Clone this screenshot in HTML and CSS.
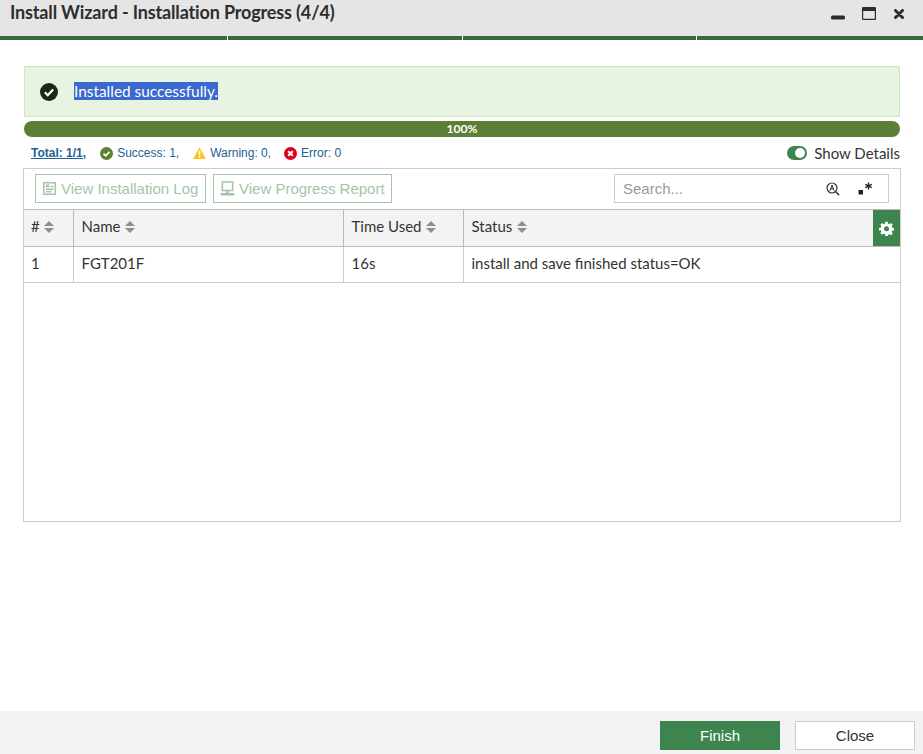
FILE: index.html
```html
<!DOCTYPE html>
<html lang="en">
<head>
<meta charset="utf-8">
<title>Install Wizard</title>
<link rel="stylesheet" href="styles.css">
</head>
<body>
<div class="dialog">
  <header class="titlebar">
    <h1 class="title">Install Wizard - Installation Progress (4/4)</h1>
    <div class="winctl">
      <svg class="ic-min" width="14" height="5" viewBox="0 0 14 5"><rect x="0" y="0.500" width="14" height="4" rx="1.500" fill="#2b2b2b"/></svg>
      <svg class="ic-max" width="14" height="13" viewBox="0 0 14 13"><path d="M1 0h12a1 1 0 0 1 1 1v11a1 1 0 0 1-1 1H1a1 1 0 0 1-1-1V1a1 1 0 0 1 1-1zM1.200 4v7.800h11.600V4z" fill="#2b2b2b" fill-rule="evenodd"/></svg>
      <svg class="ic-close" width="10" height="10" viewBox="0 0 10 10"><path d="M1.500 1.500l7 7M8.500 1.500l-7 7" stroke="#2b2b2b" stroke-width="3" stroke-linecap="round"/></svg>
    </div>
  </header>
  <div class="steps"><span class="step s1"></span><span class="step s2"></span><span class="step s3"></span><span class="step s4"></span></div>

  <main class="content">
    <div class="alert">
      <svg width="18" height="18" viewBox="0 0 18 18"><circle cx="9" cy="9" r="9" fill="#1c2a14"/><path d="M4.800 9.300l2.900 2.900 5.500-5.700" fill="none" stroke="#fff" stroke-width="2.200"/></svg>
      <span class="alert-text">Installed successfully.</span>
    </div>
    <div class="progress">100%</div>
    <div class="summary">
      <div class="counts">
        <a class="total">Total: 1/1,</a>
        <span class="count c1"><svg width="13" height="13" viewBox="0 0 13 13"><circle cx="6.500" cy="6.500" r="6.500" fill="#5a7f35"/><path d="M3.500 6.700l2.100 2.100 3.900-4" fill="none" stroke="#fff" stroke-width="1.700"/></svg>Success: 1,</span>
        <span class="count c2"><svg width="13" height="12" viewBox="0 0 13 12"><path d="M6.500 0.300L13 12H0z" fill="#fdc52c"/><rect x="5.800" y="4" width="1.400" height="4.200" fill="#fff"/><rect x="5.800" y="9" width="1.400" height="1.500" fill="#fff"/></svg>Warning: 0,</span>
        <span class="count c3"><svg width="13" height="13" viewBox="0 0 13 13"><circle cx="6.500" cy="6.500" r="6.500" fill="#e0001b"/><path d="M4.200 4.200l4.600 4.600M8.800 4.200l-4.600 4.600" stroke="#fff" stroke-width="2"/></svg>Error: 0</span>
      </div>
      <label class="toggle-row"><span class="toggle"><span class="knob"></span></span>Show Details</label>
    </div>

    <section class="panel">
      <div class="toolbar">
        <button class="tbtn b1"><svg width="15" height="15" viewBox="0 0 15 15"><path d="M1.700 1.700h11.600v11.600H1.700z" fill="none" stroke="#a3c6a9" stroke-width="1.500"/><path d="M4 3.500h3.500v2.800H4z" fill="#a3c6a9"/><path d="M8.800 5.500h2.800M4 8.300h7.600M4 10.800h5.500" stroke="#a3c6a9" stroke-width="1.400"/></svg>View Installation Log</button>
        <button class="tbtn b2"><svg width="15" height="15" viewBox="0 0 15 15"><path d="M2.300 1h10.400v8.500H2.300z" fill="none" stroke="#a3c6a9" stroke-width="1.600"/><path d="M6.300 10h2.400v2.500H6.300z" fill="#a3c6a9"/><rect x="0.500" y="12" width="14" height="2.500" rx="1" fill="#a3c6a9"/></svg>View Progress Report</button>
        <div class="search">
          <span class="ph">Search...</span>
          <svg class="s-a" width="14" height="14" viewBox="0 0 14 14"><circle cx="6" cy="6" r="5" fill="none" stroke="#333" stroke-width="1.200"/><path d="M9.800 9.800l3.300 3.300" stroke="#333" stroke-width="1.500"/><path d="M3.900 8.800l2.100-5.800 2.100 5.800M4.700 6.800h2.600" fill="none" stroke="#333" stroke-width="1"/></svg>
          <svg class="s-r" width="14" height="13" viewBox="0 0 14 13"><rect x="0.500" y="8" width="4.500" height="4.500" fill="#222"/><path d="M10.500 0.500v7M7.300 2.300l6.400 3.400M13.700 2.300l-6.400 3.400" stroke="#222" stroke-width="1.400"/></svg>
        </div>
      </div>
      <table class="grid">
        <colgroup><col class="w1"><col class="w2"><col class="w3"><col></colgroup>
        <thead>
          <tr>
            <th class="first"># <i class="sort"></i></th>
            <th>Name <i class="sort"></i></th>
            <th>Time Used <i class="sort"></i></th>
            <th class="last"><span>Status <i class="sort"></i></span>
              <span class="gear"><svg width="15" height="15" viewBox="0 0 24 24"><path fill="#fff" fill-rule="evenodd" d="M10 1h4l.7 3.200 1.800.8 2.800-1.800 2.800 2.800L20.300 8.800l.7 1.700L24 11v4l-3.100.6-.7 1.700 1.800 2.800-2.800 2.800-2.800-1.800-1.700.7L14 24h-4l-.6-3.200-1.700-.7-2.800 1.800-2.800-2.800 1.800-2.800-.8-1.700L0 15v-4l3.100-.6.800-1.700L2.100 6l2.800-2.800 2.800 1.800 1.700-.8zM12 8.500a4 4 0 1 0 0 8 4 4 0 0 0 0-8z"/></svg></span>
            </th>
          </tr>
        </thead>
        <tbody>
          <tr><td>1</td><td>FGT201F</td><td>16s</td><td>install and save finished status=OK</td></tr>
        </tbody>
      </table>
    </section>
  </main>

  <footer class="footer">
    <button class="fbtn primary">Finish</button>
    <button class="fbtn">Close</button>
  </footer>
</div>
</body>
</html>
```
FILE: styles.css
```css
* { box-sizing: border-box; }
html, body { margin: 0; height: 100%; }
body { font-family: Lato, sans-serif; color: #333; background: #fff; overflow: hidden; }
.dialog { display: flex; flex-direction: column; height: 754px; width: 923px; }

.titlebar { height: 36px; background: #e5e5e5; display: flex; align-items: flex-start; justify-content: space-between; flex: none; padding: 0 19px 0 10px; }
.title { margin: 0; font-size: 18px; line-height: 25px; font-weight: 700; color: #2e2e2e; letter-spacing: -0.15px; }
.winctl { display: flex; align-items: flex-start; padding-top: 7px; }
.ic-min { margin-right: 17px; margin-top: 8px; }
.ic-max { margin-right: 18px; }
.ic-close { margin-top: 2px; }

.steps { height: 4px; display: flex; gap: 1px; flex: none; }
.step { background: #376b3e; display: block; }
.s1 { width: 227px; }
.s2 { width: 234px; }
.s3 { width: 233px; }
.s4 { flex: 1; }

.content { flex: 1; padding: 26px 23px 0 23px; }
.alert { margin-left: 1px; height: 51px; background: #e9f3e2; border: 1px solid #cfe5bb; display: flex; align-items: center; padding-left: 15px; }
.alert svg { margin-top: 1px; }
.alert-text { margin: -2px 0 0 16px; background: #3c69cd; color: #fff; font-size: 15.4px; line-height: 18px; }

.progress { margin: 4px 0 0 1px; height: 16px; border-radius: 8px; background: #5a7f35; color: #fff; text-align: center; font-size: 12.2px; font-weight: 700; line-height: 15px; }

.summary { display: flex; justify-content: space-between; align-items: flex-end; height: 31px; padding-left: 8px; margin-left: 0; }
.counts { display: flex; align-items: center; font-family: "Liberation Sans", sans-serif; font-size: 12px; color: #205f94; height: 24px; margin-bottom: 3px; }
.total { font-weight: 700; text-decoration: underline; color: #1f5f95; margin-right: 14px; }
.count { display: inline-flex; align-items: center; gap: 4px; }
.c1 { margin-right: 14px; }
.c2 { margin-right: 13px; }
.toggle-row { display: flex; align-items: center; font-size: 15px; color: #333; height: 20px; margin-bottom: 5px; }
.toggle { width: 20px; height: 14px; border-radius: 7px; background: #3d844f; position: relative; margin-right: 7px; }
.knob { position: absolute; right: 2px; top: 2px; width: 10px; height: 10px; border-radius: 50%; background: #fff; }

.panel { height: 354px; border: 1px solid #ccc; width: 878px; }
.toolbar { height: 40px; display: flex; align-items: flex-start; padding: 5px 11px; }
.tbtn { height: 29px; background: #fff; border: 1px solid #a3c6a9; color: #a3c6a9; font-family: "Liberation Sans", sans-serif; font-size: 15px; display: flex; align-items: center; gap: 4px; padding: 0 6px; }
.b1 { width: 171px; }
.b2 { width: 179px; margin-left: 7px; }
.search { margin-left: auto; width: 275px; height: 29px; border: 1px solid #ccc; display: flex; align-items: center; padding-left: 8px; }
.ph { flex: 1; font-family: "Liberation Sans", sans-serif; font-size: 15px; color: #999; }
.s-a { margin-right: 18px; }
.s-r { margin-right: 16px; }

.grid { width: 100%; border-collapse: collapse; table-layout: fixed; font-size: 15px; color: #333; }
.w1 { width: 49px; }
.w2 { width: 270px; }
.w3 { width: 120px; }
.grid th { height: 37px; background: #f3f3f3; font-weight: 400; text-align: left; padding: 0 7px 5px 8px; border: 1px solid #bbb; border-width: 1px 1px 1px 0; }
.grid td { height: 36px; padding: 0 7px 3px 8px; border-right: 1px solid #ccc; border-bottom: 1px solid #ccc; }
.grid th:first-child, .grid td:first-child { padding-left: 7px; }
.grid th:last-child, .grid td:last-child { border-right: 0; }
.first .sort { margin-left: 0; }
.last { position: relative; }
.sort { display: inline-block; width: 10px; height: 12px; vertical-align: -1px; margin-left: 1px; position: relative; }
.sort::before, .sort::after { content: ""; position: absolute; left: 0; border-left: 5px solid transparent; border-right: 5px solid transparent; }
.sort::before { top: 0; border-bottom: 5px solid #8f8f8f; }
.sort::after { bottom: 0; border-top: 5px solid #8f8f8f; }
.gear { position: absolute; right: 0; top: 0; width: 27px; height: 36px; background: #3d844f; display: flex; align-items: center; justify-content: center; }

.footer { height: 43px; background: #f3f3f3; display: flex; justify-content: flex-end; align-items: flex-start; padding: 10px 8px 0 0; flex: none; }
.fbtn { width: 120px; height: 29px; border: 1px solid #ccc; background: #fff; color: #333; font-family: "Liberation Sans", sans-serif; font-size: 15px; margin-left: 15px; padding: 0; }
.primary { background: #3d844f; border-color: #3d844f; color: #fff; }
```
